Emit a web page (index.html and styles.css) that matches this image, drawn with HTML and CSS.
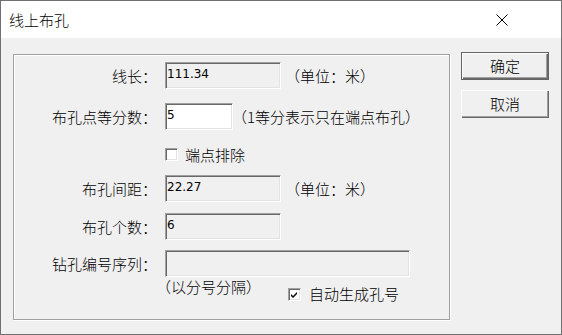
FILE: index.html
```html
<!DOCTYPE html>
<html lang="zh-CN">
<head>
    <meta charset="UTF-8">
    <title>线上布孔</title>
    <link rel="stylesheet" href="styles.css">
</head>
<body>
    <div class="window">
        <div class="titlebar">
            <span class="title">线上布孔</span>
            <svg class="close" width="12" height="12" viewBox="0 0 12 12">
                <path d="M0.5 0.5 L11.5 11.5 M11.5 0.5 L0.5 11.5" stroke="#000" stroke-width="1" fill="none"/>
            </svg>
        </div>
        <div class="content">
            <div class="group">
                <div class="row">
                    <span class="lbl">线长：</span>
                    <div class="field readonly wide">111.34</div>
                    <span class="hint">（单位：米）</span>
                </div>
                <div class="row row-2">
                    <span class="lbl">布孔点等分数：</span>
                    <div class="field narrow">5</div>
                    <span class="hint hint-tight">（1等分表示只在端点布孔）</span>
                </div>
                <div class="row row-3">
                    <span class="lbl"></span>
                    <span class="check"></span>
                    <span class="check-text">端点排除</span>
                </div>
                <div class="row row-4">
                    <span class="lbl">布孔间距：</span>
                    <div class="field readonly wide">22.27</div>
                    <span class="hint">（单位：米）</span>
                </div>
                <div class="row row-5">
                    <span class="lbl">布孔个数：</span>
                    <div class="field readonly wide">6</div>
                </div>
                <div class="row row-6">
                    <span class="lbl">钻孔编号序列：</span>
                    <div class="field readonly long"></div>
                </div>
                <div class="note-row">
                    <span class="note">（以分号分隔）</span>
                    <span class="check checked">
                        <svg width="9" height="9" viewBox="0 0 9 9">
                            <path d="M1 4 L3 6 L7 2 L7 4 L3 8 L1 6 Z" fill="#000"/>
                        </svg>
                    </span>
                    <span class="check-text auto">自动生成孔号</span>
                </div>
            </div>
            <div class="buttons">
                <button class="btn default">确定</button>
                <button class="btn">取消</button>
            </div>
        </div>
    </div>
</body>
</html>
```

FILE: styles.css
```css
body {
    margin: 0;
    font-family: "Noto Sans CJK SC", sans-serif;
    font-size: 15px;
    font-weight: 300;
    color: #000;
}
.window {
    width: 562px;
    height: 335px;
    box-sizing: border-box;
    border: 1px solid #707070;
    background-color: #f0f0f0;
    display: flex;
    flex-direction: column;
}
.titlebar {
    height: 37px;
    background-color: #fff;
    display: flex;
    align-items: center;
    justify-content: space-between;
    padding-left: 8px;
}
.title {
    font-size: 15px;
}
.close {
    margin-right: 53px;
}
.content {
    display: flex;
    align-items: flex-start;
    padding: 16px 0 0 12px;
}
.group {
    width: 437px;
    height: 266px;
    box-sizing: border-box;
    border: 1px solid #a0a0a0;
    box-shadow: inset 1px 1px #fff, 1px 1px #fff;
    padding-top: 7px;
}
.row {
    display: flex;
    align-items: center;
    height: 27px;
}
.row-2 { margin-top: 14px; }
.row-3 { margin-top: 11px; }
.row-4 { margin-top: 7px; }
.row-5 { margin-top: 11px; }
.row-6 { margin-top: 10px; }
.lbl {
    width: 143px;
    flex-shrink: 0;
    text-align: right;
    margin-right: 8px;
    white-space: nowrap;
}
.field {
    box-sizing: border-box;
    height: 27px;
    border-top: 1px solid #a0a0a0;
    border-left: 1px solid #a0a0a0;
    border-bottom: 1px solid #fff;
    border-right: 1px solid #fff;
    box-shadow: inset 1px 1px #696969, inset -1px -1px #e3e3e3;
    background-color: #fff;
    font-family: "DejaVu Sans", sans-serif;
    font-size: 12px;
    font-weight: 400;
    padding: 0 0 3px 1px;
    display: flex;
    align-items: center;
}
.field.readonly {
    background-color: #f0f0f0;
}
.wide { width: 116px; }
.narrow { width: 68px; }
.long { width: 245px; }
.hint {
    margin-left: 4px;
    white-space: nowrap;
}
.hint-tight {
    margin-left: -1px;
}
.check {
    box-sizing: border-box;
    width: 13px;
    height: 13px;
    border-top: 1px solid #a0a0a0;
    border-left: 1px solid #a0a0a0;
    border-bottom: 1px solid #fff;
    border-right: 1px solid #fff;
    box-shadow: inset 1px 1px #696969, inset -1px -1px #e3e3e3;
    background-color: #fff;
    display: flex;
    align-items: center;
    justify-content: center;
    flex-shrink: 0;
}
.check-text {
    margin-left: 7px;
    white-space: nowrap;
}
.note-row {
    display: flex;
    align-items: flex-start;
    padding-left: 142px;
}
.note {
    line-height: 20px;
    white-space: nowrap;
}
.note-row .check {
    margin: 11px 0 0 27px;
}
.check-text.auto {
    margin-left: 8px;
    margin-top: 7px;
    line-height: 20px;
}
.buttons {
    display: flex;
    flex-direction: column;
    gap: 10px;
    margin: -2px 0 0 11px;
}
.btn {
    width: 88px;
    height: 28px;
    box-sizing: border-box;
    padding: 0 0 2px 0;
    border: none;
    background-color: #f0f0f0;
    font-family: "Noto Sans CJK SC", sans-serif;
    font-size: 15px;
    font-weight: 300;
    color: #000;
    box-shadow: inset 1px 1px #fff, inset -1px -1px #696969, inset -2px -2px #a0a0a0;
}
.btn.default {
    border: 1px solid #646464;
    box-shadow: inset 1px 1px #fff, inset -1px -1px #696969, inset -2px -2px #a0a0a0;
}
```
